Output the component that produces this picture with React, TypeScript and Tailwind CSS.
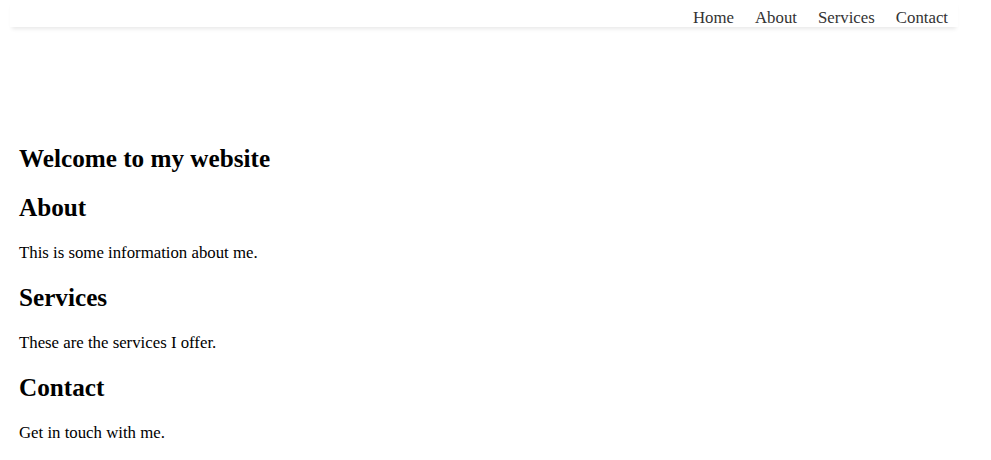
const links = ['Home', 'About', 'Services', 'Contact']

const sections = [
  { title: 'About', text: 'This is some information about me.' },
  { title: 'Services', text: 'These are the services I offer.' },
  { title: 'Contact', text: 'Get in touch with me.' },
]

export default function App() {
  return (
    <div className="min-h-[460px] bg-white font-['Liberation_Serif',_'Times_New_Roman',_serif] text-black">
      <header className="ml-[10px] h-[27px] w-[948px] bg-white shadow-[0_4px_4px_-2px_rgba(0,0,0,0.09)]">
        <nav className="flex justify-end gap-[21px] pr-[10px] pt-[8px]">
          {links.map((l) => (
            <a key={l} href="#" className="text-[16.8px] leading-[normal] text-[#333]">
              {l}
            </a>
          ))}
        </nav>
      </header>
      <main className="pl-[19px] pt-[97px]">
        <h2 className="my-[21px] text-[25.2px] font-bold leading-[normal]">Welcome to my website</h2>
        {sections.map((s) => (
          <section key={s.title}>
            <h2 className="my-[21px] text-[25.2px] font-bold leading-[normal]">{s.title}</h2>
            <p className="my-[17px] text-[16.8px] leading-[normal]">{s.text}</p>
          </section>
        ))}
      </main>
    </div>
  )
}
